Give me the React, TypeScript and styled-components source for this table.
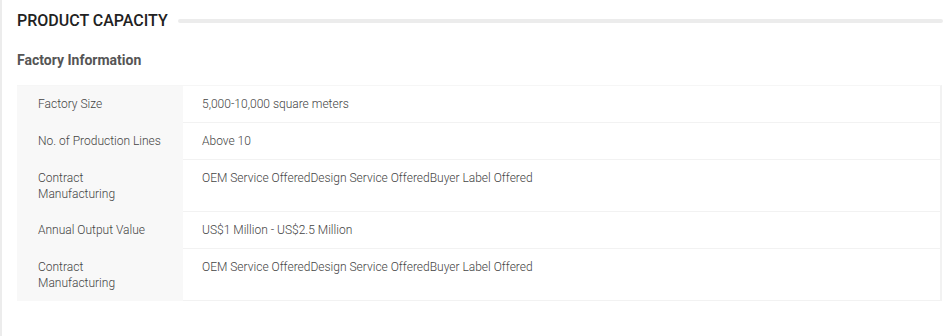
import React from "react";
import styled, { createGlobalStyle } from "styled-components";

const rows: { label: string; value: string }[] = [
  { label: "Factory Size", value: "5,000-10,000 square meters" },
  { label: "No. of Production Lines", value: "Above 10" },
  {
    label: "Contract Manufacturing",
    value: "OEM Service OfferedDesign Service OfferedBuyer Label Offered",
  },
  { label: "Annual Output Value", value: "US$1 Million - US$2.5 Million" },
  {
    label: "Contract Manufacturing",
    value: "OEM Service OfferedDesign Service OfferedBuyer Label Offered",
  },
];

const GlobalStyle = createGlobalStyle`
  body {
    margin: 0;
    background: #fff;
    font-family: Roboto, "Liberation Sans", Arial, sans-serif;
  }
`;

export default function App() {
  return (
    <>
      <GlobalStyle />
      <Page>
        <TitleBar>
          <Title>PRODUCT CAPACITY</Title>
          <TitleLine />
        </TitleBar>
        <SubTitle>Factory Information</SubTitle>
        <Table>
          {rows.map((r, i) => (
            <Row key={i}>
              <Label>{r.label}</Label>
              <Value>{r.value}</Value>
            </Row>
          ))}
        </Table>
      </Page>
    </>
  );
}

const Page = styled.div`
  height: 336px;
  box-sizing: border-box;
  border-left: 2px solid #ececec;
  padding: 10px 4px 0 15px;
`;

const TitleBar = styled.div`
  display: flex;
  align-items: center;
  gap: 10px;
  height: 20px;
`;

const Title = styled.h2`
  margin: 0;
  font-size: 16px;
  font-weight: 500;
  color: #222;
  white-space: nowrap;
`;

const TitleLine = styled.div`
  flex: 1;
  height: 4px;
  margin-top: 1px;
  border-radius: 2px;
  background: #ececec;
`;

const SubTitle = styled.h3`
  margin: 21px 0 16px;
  font-size: 14px;
  font-weight: 700;
  color: #555;
  line-height: 18px;
`;

const Table = styled.div`
  display: grid;
  grid-template-columns: 166px 1fr;
  border-top: 1px solid #f6f6f6;
  border-right: 2px solid #f2f2f2;
  margin-right: 1px;
`;

const Row = styled.div`
  display: contents;
`;

const Label = styled.div`
  background: #f8f8f8;
  padding: 10px 21px 10px 21px;
  font-size: 12px;
  font-weight: 300;
  line-height: 16px;
  color: #444;
`;

const Value = styled.div`
  padding: 10px 19px;
  font-size: 12px;
  font-weight: 300;
  line-height: 16px;
  color: #444;
  border-bottom: 1px solid #f2f2f2;
`;
